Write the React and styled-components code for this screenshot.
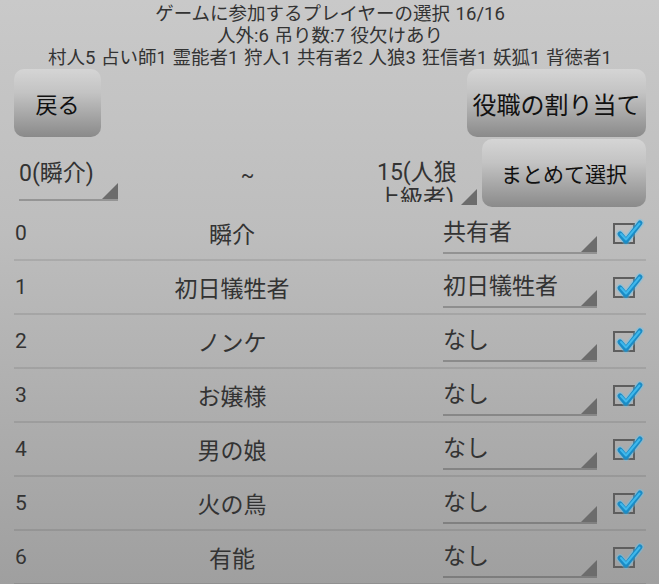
import React from "react";
import styled, { createGlobalStyle } from "styled-components";

const GlobalStyle = createGlobalStyle`
  html, body {
    margin: 0;
    padding: 0;
  }
  body {
    min-height: 100vh;
    background: linear-gradient(#c9c9c9, #bdbdbd 40%, #9f9f9f);
    font-family: Roboto, "Noto Sans CJK JP", sans-serif;
    color: #333;
    overflow: hidden;
  }
`;

const Page = styled.div`
  padding: 0 13px 0 14px;
`;

const Header = styled.div`
  padding-top: 3px;
  text-align: center;
  font-size: 18.5px;
  line-height: 22px;
  color: #333;
  white-space: nowrap;
  word-spacing: 1px;
`;

const ButtonBar = styled.div`
  display: flex;
  justify-content: space-between;
`;

const GrayButton = styled.button`
  height: 68px;
  width: ${(p) => p.$w}px;
  padding: 0;
  border: none;
  border-radius: 10px;
  background: linear-gradient(#d5d5d5, #c3c3c3 35%, #8a8a8a);
  font-family: Roboto, "Noto Sans CJK JP", sans-serif;
  font-size: ${(p) => p.$fs}px;
  color: #111;
  white-space: nowrap;
`;

const RangeRow = styled.div`
  display: flex;
  height: 68px;
  margin-top: 2px;
`;

const Spinner = styled.div`
  position: relative;
  box-sizing: border-box;
  font-size: 23px;
  line-height: 26px;
  color: #333;
  &::after {
    content: "";
    position: absolute;
    right: 0;
    bottom: 0;
    width: 16px;
    height: 16px;
    background: #6c6c6c;
    clip-path: polygon(100% 0, 100% 100%, 0 100%);
  }
`;

const FromSpinner = styled(Spinner)`
  align-self: flex-end;
  margin: 0 0 6px 5px;
  width: 99px;
  padding-bottom: 12px;
  border-bottom: 2px solid rgba(0, 0, 0, 0.22);
  white-space: nowrap;
`;

const ToSpinner = styled(Spinner)`
  width: 100px;
  margin-top: 21px;
  height: 45px;
  padding-right: 14px;
`;

const ClippedText = styled.div`
  height: 42px;
  overflow: hidden;
`;

const Tilde = styled.div`
  flex: 1;
  text-align: center;
  font-size: 20px;
  line-height: 68px;
  padding-top: 2px;
`;

const BulkButton = styled(GrayButton)`
  margin-left: 5px;
`;

const PlayerList = styled.div`
  display: flex;
  flex-direction: column;
`;

const Row = styled.div`
  display: grid;
  grid-template-columns: 40px 356px 203px 22px;
  align-items: center;
  height: 54px;
  box-sizing: border-box;
  border-bottom: 2px solid rgba(0, 0, 0, 0.09);
`;

const Num = styled.div`
  font-size: 21px;
  padding-left: 1px;
`;

const Name = styled.div`
  font-size: 23px;
  text-align: center;
`;

const RoleSpinner = styled(Spinner)`
  align-self: end;
  margin: 0 0 5px 33px;
  width: 154px;
  padding-bottom: 6px;
  border-bottom: 2px solid rgba(0, 0, 0, 0.22);
  white-space: nowrap;
`;

const CheckBox = styled.span`
  position: relative;
  display: block;
  width: 22px;
  height: 21px;
  box-sizing: border-box;
  border: 2px solid #5e5e5e;
  margin-top: 1px;
  svg {
    position: absolute;
    left: 1px;
    top: -5px;
    overflow: visible;
  }
`;

function Check() {
  return (
    <CheckBox>
      <svg width="28" height="26" viewBox="0 0 28 26">
        <polyline
          points="4,14 10,21 24,3"
          fill="none"
          stroke="rgba(90,200,255,0.35)"
          strokeWidth="8"
          strokeLinecap="round"
          strokeLinejoin="round"
        />
        <polyline
          points="4,14 10,21 24,3"
          fill="none"
          stroke="#1a8cc6"
          strokeWidth="5"
          strokeLinecap="round"
          strokeLinejoin="round"
        />
        <polyline
          points="5,14 10,19.5 23.5,3.5"
          fill="none"
          stroke="#3fb8ec"
          strokeWidth="2"
          strokeLinecap="round"
          strokeLinejoin="round"
        />
      </svg>
    </CheckBox>
  );
}

const players = [
  { name: "瞬介", role: "共有者" },
  { name: "初日犠牲者", role: "初日犠牲者" },
  { name: "ノンケ", role: "なし" },
  { name: "お嬢様", role: "なし" },
  { name: "男の娘", role: "なし" },
  { name: "火の鳥", role: "なし" },
  { name: "有能", role: "なし" },
];

export default function App() {
  return (
    <Page>
      <GlobalStyle />
      <Header>
        <div>ゲームに参加するプレイヤーの選択 16/16</div>
        <div>人外:6 吊り数:7 役欠けあり</div>
        <div>村人5 占い師1 霊能者1 狩人1 共有者2 人狼3 狂信者1 妖狐1 背徳者1</div>
      </Header>
      <ButtonBar>
        <GrayButton $w={87} $fs={22}>
          戻る
        </GrayButton>
        <GrayButton $w={179} $fs={24}>
          役職の割り当て
        </GrayButton>
      </ButtonBar>
      <RangeRow>
        <FromSpinner>0(瞬介)</FromSpinner>
        <Tilde>~</Tilde>
        <ToSpinner>
          <ClippedText>15(人狼上級者)</ClippedText>
        </ToSpinner>
        <BulkButton $w={164} $fs={21}>
          まとめて選択
        </BulkButton>
      </RangeRow>
      <PlayerList>
        {players.map((p, i) => (
          <Row key={i}>
            <Num>{i}</Num>
            <Name>{p.name}</Name>
            <RoleSpinner>{p.role}</RoleSpinner>
            <Check />
          </Row>
        ))}
      </PlayerList>
    </Page>
  );
}
